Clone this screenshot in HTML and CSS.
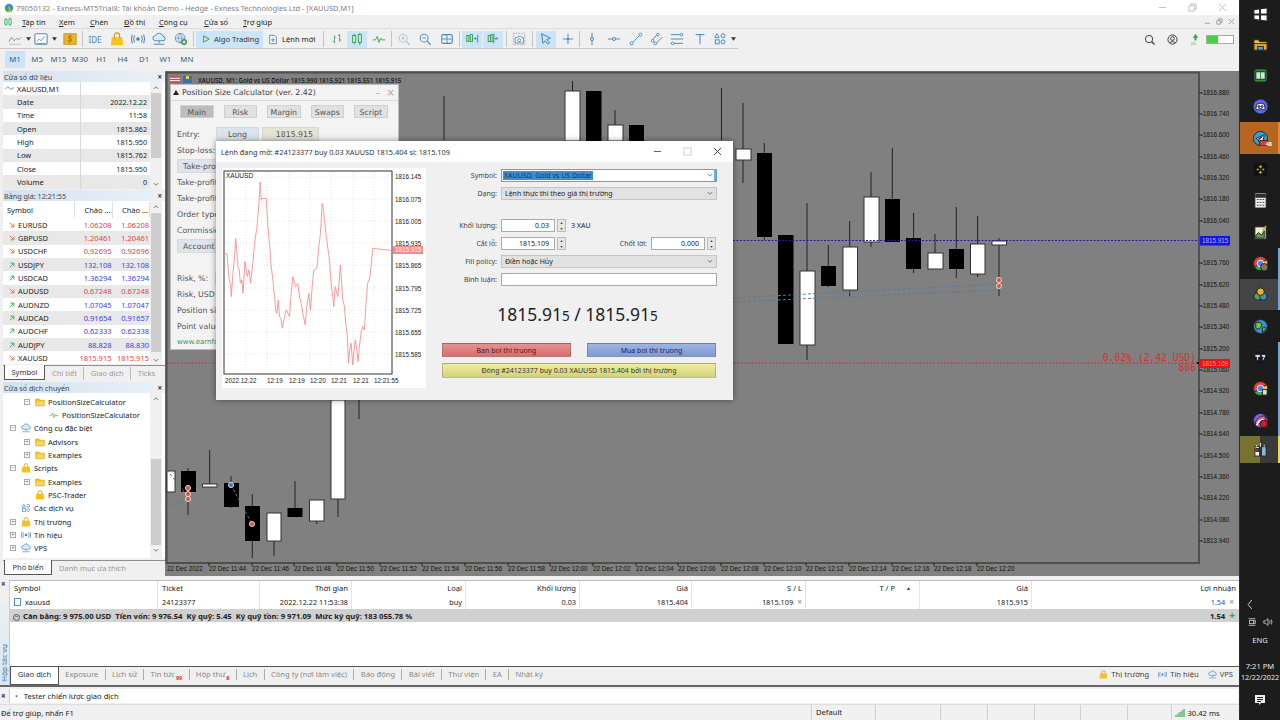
FILE: index.html
```html
<!DOCTYPE html>
<html lang="vi">
<head>
<meta charset="utf-8">
<title>Exness MT5</title>
<link rel="stylesheet" href="styles.css">
</head>
<body>
<svg class="sprite" width="0" height="0">
  <symbol id="folder" viewBox="0 0 16 16"><path d="M1 3h5l2 2h7v9H1z" fill="#f6c21c" stroke="#c99a10" stroke-width=".8"/><path d="M2 7h12v6H2z" fill="#fbd95a"/></symbol>
  <symbol id="bag" viewBox="0 0 16 16"><path d="M2 6h12l1 9H1z" fill="#f6c21c"/><path d="M5 7V4a3 3 0 0 1 6 0v3" fill="none" stroke="#c99a10" stroke-width="1.3"/></symbol>
  <symbol id="signal" viewBox="0 0 16 16"><g fill="none" stroke="#3f7fb5" stroke-width="1.1"><path d="M4 4q-2 4 0 8M12 4q2 4 0 8M1.5 3q-2 5 0 10M14.500 3q2 5 0 10"/></g><circle cx="8" cy="8" r="2" fill="#3f7fb5"/></symbol>
  <symbol id="cloud" viewBox="0 0 16 16"><path d="M4 10a3 3 0 0 1 0-6 4.500 4.500 0 0 1 8.500 1 2.500 2.500 0 0 1 0 5z" fill="#dbeaf7" stroke="#3f7fb5"/><path d="M8 10v3M2 14h12" stroke="#3f7fb5"/></symbol>
  <symbol id="globe" viewBox="0 0 16 16"><circle cx="7" cy="7" r="5.500" fill="#dbeaf7" stroke="#5b8fb9"/><path d="M1.500 7h11M7 1.500q-4 5.500 0 11M7 1.500q4 5.500 0 11" fill="none" stroke="#5b8fb9" stroke-width=".7"/><circle cx="11.500" cy="11.500" r="3.500" fill="#3d9a50"/><path d="M11.500 9.500v4M9.500 11.500h4" stroke="#fff"/></symbol>
  <symbol id="lchart" viewBox="0 0 16 16"><path d="M1 11l3-5 3 4 3-3 2 2 3-3" fill="none" stroke="#5b8fb9"/><path d="M1 14h14" stroke="#bbb"/></symbol>
  <symbol id="tpl" viewBox="0 0 16 16"><rect x="1" y="2" width="14" height="12" rx="1.500" fill="#fff" stroke="#4d87b8" stroke-width="1.200"/><path d="M3 11l3-3 2 2 4-5" fill="none" stroke="#4d87b8"/><path d="M3 13h10" stroke="#53a653"/></symbol>
  <symbol id="dollar" viewBox="0 0 16 16"><rect x="1" y="2" width="14" height="12" fill="#edb529" stroke="#c4921a"/><path d="M10.500 5.500q-1-1-2.500-1-2 0-2 1.500t2 1.500 2 1.500-2.500 1.500-2.500-1M8 3v10" fill="none" stroke="#a3730a"/></symbol>
  <symbol id="bars" viewBox="0 0 16 16"><path d="M5 4v9M3 11h2M5 6h2" fill="none" stroke="#4aa65a"/><path d="M11 2v9M9 4h2M11 9h2" fill="none" stroke="#4aa65a"/></symbol>
  <symbol id="candles" viewBox="0 0 16 16"><g fill="#c7f0cf" stroke="#2d9c46"><rect x="3" y="4" width="3.500" height="8"/><rect x="9.500" y="3" width="3.500" height="9"/></g><path d="M4.700 2v2M4.700 12v2M11.200 1v2M11.200 12v3" stroke="#2d9c46"/></symbol>
  <symbol id="gline" viewBox="0 0 16 16"><path d="M1 9h3l2-4 2 7 2-5 1 2h4" fill="none" stroke="#3d9a50"/></symbol>
  <symbol id="zin" viewBox="0 0 16 16"><circle cx="7" cy="7" r="4.500" fill="none" stroke="#b5c3cf" stroke-width="1.200"/><path d="M10.500 10.500l4 4" stroke="#b5c3cf" stroke-width="1.500"/><path d="M5 7h4M7 5v4" stroke="#b5c3cf"/></symbol>
  <symbol id="zout" viewBox="0 0 16 16"><circle cx="7" cy="7" r="4.500" fill="none" stroke="#5b8fb9" stroke-width="1.200"/><path d="M10.500 10.500l4 4" stroke="#5b8fb9" stroke-width="1.500"/><path d="M5 7h4" stroke="#5b8fb9"/></symbol>
  <symbol id="grid" viewBox="0 0 16 16"><rect x="2" y="3" width="12" height="10" rx="1.500" fill="none" stroke="#4d87b8" stroke-width="1.200"/><path d="M2 8h12M8 3v10" stroke="#4d87b8"/></symbol>
  <symbol id="auto" viewBox="0 0 16 16"><rect x="2" y="4" width="2.500" height="7" fill="#bdeec8" stroke="#2d9c46"/><rect x="6" y="3" width="2.500" height="8" fill="#bdeec8" stroke="#2d9c46"/><path d="M10 7.500h3M11.500 6l1.500 1.500-1.500 1.500M14.500 3v9" fill="none" stroke="#3f7fb5"/></symbol>
  <symbol id="shift" viewBox="0 0 16 16"><rect x="2.500" y="4" width="2.500" height="7" fill="#bdeec8" stroke="#2d9c46"/><rect x="5.500" y="3" width="2.500" height="8" fill="#bdeec8" stroke="#2d9c46"/><path d="M14 7.500h-3.500M12 6l-1.500 1.500 1.500 1.500M9 2v11" fill="none" stroke="#3f7fb5"/></symbol>
  <symbol id="cam" viewBox="0 0 16 16"><rect x="1.500" y="1.500" width="13" height="13" fill="none" stroke="#8a9aa8" stroke-dasharray="1.500 1.500"/><path d="M3.500 6.500h2.500l1-1.500h3l1 1.500h2v6h-9.500z" fill="#fff" stroke="#4d87b8"/><circle cx="8.200" cy="9.500" r="1.800" fill="none" stroke="#4d87b8"/></symbol>
  <symbol id="cursor" viewBox="0 0 16 16"><path d="M3 2l10 5-4 1.500 3 4-2 1.500-3-4-2.500 3z" fill="none" stroke="#3f7fb5" stroke-width="1.100"/></symbol>
  <symbol id="cross" viewBox="0 0 16 16"><path d="M8 2v12M2 8h12" stroke="#3f7fb5"/><circle cx="8" cy="8" r="1.200" fill="#3f7fb5"/></symbol>
  <symbol id="vl" viewBox="0 0 16 16"><path d="M8 1v14" stroke="#3f7fb5"/><circle cx="8" cy="8" r="1.800" fill="#dbeaf7" stroke="#3f7fb5"/></symbol>
  <symbol id="hl" viewBox="0 0 16 16"><path d="M1 8h14" stroke="#3f7fb5"/><circle cx="8" cy="8" r="1.800" fill="#dbeaf7" stroke="#3f7fb5"/></symbol>
  <symbol id="trend" viewBox="0 0 16 16"><path d="M3 13L13 3" stroke="#3f7fb5"/><circle cx="3" cy="13" r="1.700" fill="#fff" stroke="#3f7fb5"/><circle cx="13" cy="3" r="1.700" fill="#fff" stroke="#3f7fb5"/></symbol>
  <symbol id="chan" viewBox="0 0 16 16"><path d="M2 10l7-8M6 14l8-8" stroke="#3f7fb5"/><circle cx="3" cy="10" r="1.500" fill="#fff" stroke="#3f7fb5"/><circle cx="9" cy="3" r="1.500" fill="#fff" stroke="#3f7fb5"/><circle cx="6" cy="13" r="1.500" fill="#fff" stroke="#3f7fb5"/></symbol>
  <symbol id="fibo" viewBox="0 0 16 16"><path d="M1 3h14M1 8h14M1 13h14" stroke="#3f7fb5"/><circle cx="13" cy="3" r="1.500" fill="#fff" stroke="#3f7fb5"/><circle cx="3" cy="13" r="1.500" fill="#fff" stroke="#3f7fb5"/></symbol>
  <symbol id="ttool" viewBox="0 0 16 16"><path d="M3 3h10M8 3v11" stroke="#3f7fb5" stroke-width="1.100"/></symbol>
  <symbol id="shapes" viewBox="0 0 16 16"><path d="M4.500 2l2.500 4.500h-5z" fill="none" stroke="#3f7fb5"/><circle cx="11.500" cy="4.300" r="2.300" fill="none" stroke="#3f7fb5"/><rect x="2.500" y="9" width="4.500" height="4.500" fill="none" stroke="#3f7fb5"/><circle cx="11.500" cy="11.300" r="2.300" fill="none" stroke="#3f7fb5"/></symbol>
  <symbol id="tri" viewBox="0 0 6 4"><path d="M0 0h6L3 4z" fill="#333"/></symbol>
  <symbol id="up" viewBox="0 0 8 6"><path d="M1 5l3-3 3 3" fill="none" stroke="#555"/></symbol>
  <symbol id="down" viewBox="0 0 8 6"><path d="M1 1l3 3 3-3" fill="none" stroke="#555"/></symbol>
  <symbol id="ared" viewBox="0 0 8 8"><path d="M1 1l5 5M2 6.500h4.500V2" fill="none" stroke="#e8604c" stroke-width="1.200"/></symbol>
  <symbol id="agrn" viewBox="0 0 8 8"><path d="M1 7l5-5M2 1.500h4.500V6" fill="none" stroke="#2fa14f" stroke-width="1.200"/></symbol>
</svg>

<div class="screen">
  <div class="app">
    <header class="titlebar">
      <svg class="appico" viewBox="0 0 12 12"><circle cx="6" cy="6" r="5" fill="#3b8fc9"/><path d="M3 11l3-8 3 8z" fill="#e8b21c"/><circle cx="4" cy="8" r="2.200" fill="#4aa65a"/></svg>
      <span class="titletext">79050132 - Exness-MT5Trial8: Tài khoản Demo - Hedge - Exness Technologies Ltd - [XAUUSD,M1]</span>
      <div class="winctl">
        <svg viewBox="0 0 10 10"><path d="M1 5h8" stroke="#bbb"/></svg>
        <svg viewBox="0 0 10 10"><path d="M1 3h6v6H1zM3 3V1h6v6H7" fill="none" stroke="#bbb"/></svg>
        <svg viewBox="0 0 10 10"><path d="M1 1l8 8M9 1l-8 8" stroke="#bbb"/></svg>
      </div>
    </header>
    <nav class="menubar">
      <svg class="menuico"><use href="#candles"/></svg>
      <span class="m1"><u>T</u>ập tin</span><span class="m2"><u>X</u>em</span><span class="m3"><u>C</u>hèn</span><span class="m4"><u>Đ</u>ồ thị</span><span class="m5"><u>C</u>ông cụ</span><span class="m6"><u>C</u>ửa sổ</span><span class="m7"><u>T</u>rợ giúp</span>
      <div class="mdi">
        <svg viewBox="0 0 8 8"><path d="M1 6h6" stroke="#999"/></svg>
        <svg viewBox="0 0 8 8"><path d="M1 3h4v4H1zM3 3V1h4v4H5" fill="none" stroke="#999"/></svg>
        <svg viewBox="0 0 8 8"><path d="M1 1l6 6M7 1L1 7" stroke="#999"/></svg>
      </div>
    </nav>
    <div class="toolbar">
      <div class="tb"><svg><use href="#lchart"/></svg></div><div class="dd"><svg><use href="#tri"/></svg></div>
      <div class="tb"><svg><use href="#tpl"/></svg></div><div class="dd"><svg><use href="#tri"/></svg></div>
      <div class="tb ml3"><svg><use href="#dollar"/></svg></div>
      <i class="sep s1"></i>
      <div class="tb ide">IDE</div>
      <div class="tb ml2"><svg><use href="#bag"/></svg></div>
      <div class="tb ml1"><svg><use href="#signal"/></svg></div>
      <div class="tb ml1"><svg><use href="#cloud"/></svg></div>
      <div class="tb ml2"><svg><use href="#globe"/></svg></div>
      <i class="sep s1"></i>
      <div class="algo"><svg viewBox="0 0 10 10"><path d="M2 1l7 4-7 4z" fill="none" stroke="#2d9c46" stroke-width="1.100"/></svg>Algo Trading</div>
      <div class="neworder"><svg viewBox="0 0 12 12"><path d="M2 1h6l2 2v8H2z" fill="#fff" stroke="#3f7fb5"/><path d="M6 4v5M3.500 6.500h5" stroke="#3f7fb5"/></svg>Lệnh mới</div>
      <i class="sep s2"></i>
      <div class="tb"><svg><use href="#bars"/></svg></div>
      <div class="tb on"><svg><use href="#candles"/></svg></div>
      <div class="tb ml2"><svg><use href="#gline"/></svg></div>
      <i class="sep s1"></i>
      <div class="tb"><svg><use href="#zin"/></svg></div>
      <div class="tb ml1"><svg><use href="#zout"/></svg></div>
      <div class="tb ml2"><svg><use href="#grid"/></svg></div>
      <i class="sep s1"></i>
      <div class="tb on"><svg><use href="#auto"/></svg></div>
      <div class="tb on ml1"><svg><use href="#shift"/></svg></div>
      <i class="sep s3"></i>
      <div class="tb"><svg><use href="#cam"/></svg></div>
      <i class="sep s2"></i>
      <div class="tb on"><svg><use href="#cursor"/></svg></div>
      <div class="tb ml2"><svg><use href="#cross"/></svg></div>
      <i class="sep s4"></i>
      <div class="tb"><svg><use href="#vl"/></svg></div>
      <div class="tb ml2"><svg><use href="#hl"/></svg></div>
      <div class="tb ml2"><svg><use href="#trend"/></svg></div>
      <div class="tb ml1"><svg><use href="#chan"/></svg></div>
      <div class="tb"><svg><use href="#fibo"/></svg></div>
      <div class="tb ml3"><svg><use href="#ttool"/></svg></div>
      <div class="tb"><svg><use href="#shapes"/></svg></div><div class="dd"><svg><use href="#tri"/></svg></div>
      <div class="tbright">
        <svg viewBox="0 0 12 12"><circle cx="5.500" cy="5.500" r="4" fill="none" stroke="#333"/><path d="M8.500 8.500l3 3" stroke="#333" stroke-width="1.300"/></svg>
        <svg viewBox="0 0 12 12"><circle cx="6" cy="6" r="5" fill="none" stroke="#333"/><circle cx="6" cy="5" r="2" fill="none" stroke="#333"/><path d="M2.500 9.500q3.500-3 7 0" fill="none" stroke="#333"/></svg>
        <svg viewBox="0 0 12 12"><path d="M6 0l3 4H7v3H5V4H3z" fill="#2fa14f"/><text x="1" y="12" class="lvl">LVL</text></svg>
        <div class="level"><i></i></div>
      </div>
    </div>
    <div class="tfbar">
      <span class="tf on">M1</span><span class="tf">M5</span><span class="tf">M15</span><span class="tf">M30</span><span class="tf">H1</span><span class="tf">H4</span><span class="tf">D1</span><span class="tf">W1</span><span class="tf">MN</span>
    </div>

    <main class="workspace">
      <aside class="left">
        <section class="panel data">
          <div class="phead"><span>Cửa sổ dữ liệu</span><b>×</b></div>
          <div class="pbody">
            <div class="dtable">
              <div class="drow hd"><span class="dsym"><svg viewBox="0 0 10 10"><path d="M0 6l3-3 3 3 4-2" fill="none" stroke="#5b8fb9"/></svg>XAUUSD,M1</span><span></span></div>
              <div class="drow alt"><span>Date</span><span>2022.12.22</span></div>
              <div class="drow"><span>Time</span><span>11:58</span></div>
              <div class="drow alt"><span>Open</span><span>1815.862</span></div>
              <div class="drow"><span>High</span><span>1815.950</span></div>
              <div class="drow alt"><span>Low</span><span>1815.762</span></div>
              <div class="drow"><span>Close</span><span>1815.950</span></div>
              <div class="drow alt"><span>Volume</span><span>0</span></div>
            </div>
            <div class="sbar"><svg><use href="#up"/></svg><i class="thumb t1"></i><svg><use href="#down"/></svg></div>
          </div>
        </section>
        <section class="panel mw">
          <div class="phead"><span>Bảng giá: 12:21:55</span><b>×</b></div>
          <div class="pbody">
            <div class="mtable">
              <div class="mrow hd"><span>Symbol</span><span>Chào ...</span><span>Chào ...</span></div>
              <div class="mrow dn"><span><svg><use href="#ared"/></svg>EURUSD</span><span>1.06208</span><span>1.06208</span></div>
              <div class="mrow dn alt"><span><svg><use href="#ared"/></svg>GBPUSD</span><span>1.20461</span><span>1.20461</span></div>
              <div class="mrow dn"><span><svg><use href="#ared"/></svg>USDCHF</span><span>0.92695</span><span>0.92696</span></div>
              <div class="mrow upv alt"><span><svg><use href="#agrn"/></svg>USDJPY</span><span>132.108</span><span>132.108</span></div>
              <div class="mrow upv"><span><svg><use href="#agrn"/></svg>USDCAD</span><span>1.36294</span><span>1.36294</span></div>
              <div class="mrow dn alt"><span><svg><use href="#ared"/></svg>AUDUSD</span><span>0.67248</span><span>0.67248</span></div>
              <div class="mrow upv"><span><svg><use href="#agrn"/></svg>AUDNZD</span><span>1.07045</span><span>1.07047</span></div>
              <div class="mrow upv alt"><span><svg><use href="#agrn"/></svg>AUDCAD</span><span>0.91654</span><span>0.91657</span></div>
              <div class="mrow upv"><span><svg><use href="#agrn"/></svg>AUDCHF</span><span>0.62333</span><span>0.62338</span></div>
              <div class="mrow upv alt"><span><svg><use href="#agrn"/></svg>AUDJPY</span><span>88.828</span><span>88.830</span></div>
              <div class="mrow dn"><span><svg><use href="#ared"/></svg>XAUUSD</span><span>1815.915</span><span>1815.915</span></div>
            </div>
            <div class="sbar"><svg><use href="#up"/></svg><i class="thumb t2"></i><svg><use href="#down"/></svg></div>
          </div>
          <div class="ptabs mwtabs"><span class="active">Symbol</span><span>Chi tiết</span><span>Giao dịch</span><span>Ticks</span></div>
        </section>
        <section class="panel nav">
          <div class="phead"><span>Cửa sổ dịch chuyển</span><b>×</b></div>
          <div class="pbody">
            <div class="tree">
              <div class="node l2"><i class="box">−</i><svg><use href="#folder"/></svg>PositionSizeCalculator</div>
              <div class="node l3"><svg><use href="#gline"/></svg>PositionSizeCalculator</div>
              <div class="node l1"><i class="box">−</i><svg><use href="#cloud"/></svg>Công cụ đặc biệt</div>
              <div class="node l2"><i class="box">+</i><svg><use href="#folder"/></svg>Advisors</div>
              <div class="node l2"><i class="box">+</i><svg><use href="#folder"/></svg>Examples</div>
              <div class="node l1"><i class="box">−</i><svg><use href="#bag"/></svg>Scripts</div>
              <div class="node l2"><i class="box">+</i><svg><use href="#folder"/></svg>Examples</div>
              <div class="node l2"><i class="box nobox"></i><svg><use href="#bag"/></svg>PSC-Trader</div>
              <div class="node l1"><i class="box nobox"></i><svg><use href="#shapes"/></svg>Các dịch vụ</div>
              <div class="node l1"><i class="box">+</i><svg><use href="#bag"/></svg>Thị trường</div>
              <div class="node l1"><i class="box">+</i><svg><use href="#signal"/></svg>Tín hiệu</div>
              <div class="node l1"><i class="box">+</i><svg><use href="#cloud"/></svg>VPS</div>
            </div>
            <div class="sbar nb"><svg><use href="#up"/></svg><i class="thumb t3"></i><svg><use href="#down"/></svg></div>
          </div>
          <div class="ptabs navtabs"><span class="active">Phổ biến</span><span>Danh mục ưa thích</span></div>
        </section>
      </aside>

      <section class="chart">
        <svg class="plot" viewBox="165 71 1074 505" width="1074" height="505">
          <rect x="165" y="71" width="1074" height="505" fill="#808080"/>
          <path d="M166.500 563V72.500H1199V563z" fill="none" stroke="#4f4f4f" stroke-width="2"/>
          <g class="wick">
            <path d="M444 96V140M572.500 81V91M615 110V125M721.500 88V140M743 103V183M764.300 143V240M807 203V360M828.300 245V287M849.700 221V296M871 172V247M892.300 148V242M913.600 213V273M935 234V269M956.300 207V278M977.600 216V277M999 238V296"/>
            <path d="M188 468V515M209.700 450V487M231 476V508M252.300 494V558M274 513V556M295 481V517M316.700 500V524M338 400V517M359 400V419"/>
          </g>
          <g class="wc">
            <rect x="565" y="91" width="15" height="50"/><rect x="608" y="125" width="15" height="16"/>
            <rect x="736" y="149" width="15" height="11"/><rect x="800" y="271" width="15" height="74"/><rect x="843" y="247" width="14.500" height="43"/><rect x="864" y="197" width="15" height="45"/><rect x="928" y="253" width="15" height="16"/><rect x="970.500" y="244" width="14.500" height="30"/><rect x="992" y="241" width="14.500" height="4"/>
            <rect x="167" y="471" width="8" height="21"/><rect x="202.500" y="484" width="14.500" height="3"/><rect x="267" y="513" width="14" height="28"/><rect x="309.500" y="500" width="14.500" height="21"/><rect x="331" y="400" width="14" height="99"/>
          </g>
          <g class="bc">
            <rect x="586" y="91" width="15.500" height="50"/><rect x="629" y="125" width="15" height="16"/>
            <rect x="757" y="153" width="15" height="84"/><rect x="778" y="235" width="15.500" height="109"/><rect x="821" y="266" width="15" height="20"/><rect x="885" y="199" width="15" height="43"/><rect x="906" y="238" width="15" height="31"/><rect x="949" y="249" width="15" height="20"/>
            <rect x="181" y="471" width="15" height="21"/><rect x="224" y="483" width="15" height="24"/><rect x="245" y="506" width="15" height="35"/><rect x="287.500" y="508" width="15" height="9"/>
          </g>
          <path d="M733 240.500H1199" stroke="#2020a0" stroke-dasharray="2 1.500"/>
          <path d="M167 363H1199" stroke="#d02020" stroke-dasharray="1.500 2"/>
          <g class="trade">
            <path d="M733 298L997 284M733 302L997 290M167 470L188 497M167 505L188 501M231 485L252 524"/>
          </g>
          <g class="mark">
            <circle cx="999" cy="280" r="2.500"/><circle cx="999" cy="286" r="2.500"/><circle cx="188" cy="488" r="2.500"/><circle cx="188" cy="494" r="2.500"/><circle cx="188" cy="499" r="2.500"/><circle cx="252" cy="524" r="2.500"/>
            <circle class="bl" cx="231" cy="485" r="2.500"/>
          </g>
          <text class="ptext" x="1196" y="361" text-anchor="end">0.02% (2.42 USD)</text>
          <text class="ptext" x="1196" y="371" text-anchor="end">806</text>
          <g class="axis">
            <path class="tk" d="M1199 93h4M1199 114h4M1199 135h4M1199 157h4M1199 178h4M1199 199h4M1199 221h4M1199 263h4M1199 285h4M1199 306h4M1199 327h4M1199 349h4M1199 370h4M1199 391h4M1199 413h4M1199 434h4M1199 456h4M1199 477h4M1199 498h4M1199 520h4M1199 541h4M209 563v3M252 563v3M294 563v3M337 563v3M380 563v3M422 563v3M465 563v3M508 563v3M550 563v3M593 563v3M636 563v3M678 563v3M721 563v3M764 563v3M806 563v3M849 563v3M892 563v3M934 563v3M977 563v3"/>
            <text x="1203" y="95">1816.880</text><text x="1203" y="116">1816.740</text><text x="1203" y="137">1816.600</text><text x="1203" y="159">1816.460</text><text x="1203" y="180">1816.320</text><text x="1203" y="201">1816.180</text><text x="1203" y="223">1816.040</text>
            <text x="1203" y="265">1815.760</text><text x="1203" y="287">1815.620</text><text x="1203" y="308">1815.480</text><text x="1203" y="329">1815.340</text><text x="1203" y="351">1815.200</text><text x="1203" y="372">1815.060</text><text x="1203" y="393">1814.920</text><text x="1203" y="415">1814.780</text><text x="1203" y="436">1814.640</text><text x="1203" y="458">1814.500</text><text x="1203" y="479">1814.360</text><text x="1203" y="500">1814.220</text><text x="1203" y="522">1814.080</text><text x="1203" y="543">1813.940</text>
            <text x="167" y="571">22 Dec 2022</text><text x="209" y="571">22 Dec 11:44</text><text x="252" y="571">22 Dec 11:46</text><text x="294" y="571">22 Dec 11:48</text><text x="337" y="571">22 Dec 11:50</text><text x="380" y="571">22 Dec 11:52</text><text x="422" y="571">22 Dec 11:54</text><text x="465" y="571">22 Dec 11:56</text><text x="508" y="571">22 Dec 11:58</text><text x="550" y="571">22 Dec 12:00</text><text x="593" y="571">22 Dec 12:02</text><text x="636" y="571">22 Dec 12:04</text><text x="678" y="571">22 Dec 12:06</text><text x="721" y="571">22 Dec 12:08</text><text x="764" y="571">22 Dec 12:10</text><text x="806" y="571">22 Dec 12:12</text><text x="849" y="571">22 Dec 12:14</text><text x="892" y="571">22 Dec 12:16</text><text x="934" y="571">22 Dec 12:18</text><text x="977" y="571">22 Dec 12:20</text>
          </g>
          <rect x="1200" y="236" width="30" height="9.500" fill="#1414e6"/>
          <text class="tag" x="1202" y="243" fill="#b8b8f0">1815.915</text>
          <rect x="1200" y="359" width="30" height="9" fill="#ee1111"/>
          <text class="tag" x="1202" y="366" fill="#f0a0a0">1815.109</text>
          <rect x="1197" y="362" width="2" height="2" fill="#000"/>
          <g>
            <rect x="170" y="76" width="10" height="7" fill="#d34a4a"/><path d="M170 78.300h10M170 80.600h10" stroke="#fff"/>
            <rect x="183" y="76" width="9" height="7" fill="#3a6fb0"/><rect x="186" y="76" width="3" height="3" fill="#e8d040"/>
            <text class="ctitle" x="198" y="83">XAUUSD, M1:  Gold vs US Dollar  1815.990 1815.921 1815.551 1815.915</text>
          </g>
        </svg>

        <div class="psc">
          <div class="psc-title"><span><i class="psc-tri"></i>Position Size Calculator (ver. 2.42)</span><span class="psc-ctl">–&nbsp;&nbsp;×</span></div>
          <div class="psc-tabs"><span class="on">Main</span><span>Risk</span><span>Margin</span><span>Swaps</span><span>Script</span></div>
          <div class="psc-body">
            <div class="pr"><label>Entry:</label><span class="pb long">Long</span><span class="pb val">1815.915</span></div>
            <div class="pr"><label>Stop-loss:</label></div>
            <div class="pr"><span class="pb wide">Take-profit</span></div>
            <div class="pr"><label>Take-profit</label></div>
            <div class="pr"><label>Take-profit</label></div>
            <div class="pr"><label>Order type</label></div>
            <div class="pr"><label>Commission</label></div>
            <div class="pr"><span class="pb wide">Account balance</span></div>
            <div class="pr gap"><label>Risk, %:</label><span class="pb in">1</span></div>
            <div class="pr"><label>Risk, USD</label></div>
            <div class="pr"><label>Position size</label></div>
            <div class="pr"><label>Point value</label></div>
            <div class="pr link">www.earnforex.com</div>
          </div>
        </div>

        <div class="dialog">
          <div class="dlg-title"><span>Lệnh đang mở: #24123377 buy 0.03 XAUUSD 1815.404 sl: 1815.109</span>
            <div class="dlg-ctl">
              <svg viewBox="0 0 10 10"><path d="M1 5h8" stroke="#555"/></svg>
              <svg viewBox="0 0 10 10"><rect x="1" y="1" width="8" height="8" fill="none" stroke="#ccc"/></svg>
              <svg viewBox="0 0 10 10"><path d="M1 1l8 8M9 1l-8 8" stroke="#333"/></svg>
            </div>
          </div>
          <div class="dlg-body">
            <div class="tickbox">
              <svg class="tick" viewBox="222 168 204 220" width="204" height="220">
                <rect x="224" y="171" width="168" height="203" fill="#fff" stroke="#333"/>
                <g class="tgrid"><path d="M246 172V373M267 172V373M289 172V373M310 172V373M331 172V373M353 172V373M374 172V373M225 177H391M225 199H391M225 221H391M225 243H391M225 265H391M225 288H391M225 310H391M225 332H391M225 354H391"/></g>
                <svg x="224" y="171" width="167" height="203" viewBox="163 303 502 609">
                  <polyline class="tline" points="163,550 172,552 178,625 182,640 185,680 190,610 195,560 198,505 202,550 205,590 209,600 212,640 217,630 220,670 226,575 233,620 238,600 243,640 250,575 255,520 262,470 268,400 272,335 275,390 277,385 290,385 295,470 300,520 305,590 310,630 315,680 318,720 322,730 326,690 330,740 334,745 338,775 344,745 350,720 355,730 360,740 365,670 370,620 378,650 385,640 390,680 395,700 401,735 407,765 412,710 418,670 423,720 428,650 433,600 442,595 448,530 453,490 458,400 462,420 465,450 472,510 476,540 480,570 485,640 490,680 493,710 497,650 505,680 509,640 513,585 520,690 525,710 530,770 534,800 537,880 541,840 545,820 550,885 554,840 558,810 562,840 566,875 570,830 575,790 580,770 585,780 590,700 595,640 602,620 606,580 610,535 665,541"/>
                </svg>
                <text class="tl sym" x="226" y="178">XAUUSD</text>
                <g class="tl">
                  <text x="395" y="179">1816.145</text><text x="395" y="202">1816.075</text><text x="395" y="224">1816.005</text><text x="395" y="246">1815.935</text><text x="395" y="268">1815.865</text><text x="395" y="291">1815.795</text><text x="395" y="313">1815.725</text><text x="395" y="335">1815.655</text><text x="395" y="357">1815.585</text>
                  <text x="225" y="383">2022.12.22</text><text x="267" y="383">12:19</text><text x="289" y="383">12:19</text><text x="310" y="383">12:20</text><text x="331" y="383">12:21</text><text x="353" y="383">12:21</text><text x="374" y="383">12:21:55</text>
                </g>
                <rect x="393" y="246" width="30" height="8" fill="#f58a8a"/>
                <text class="tl wh" x="395" y="252">1815.915</text>
              </svg>
            </div>
            <div class="orderform">
              <div class="fr"><label>Symbol:</label><div class="combo sel"><span class="seltext">XAUUSD, Gold vs US Dollar</span><svg><use href="#down"/></svg></div></div>
              <div class="fr"><label>Dạng:</label><div class="combo"><span>Lệnh thực thi theo giá thị trường</span><svg><use href="#down"/></svg></div></div>
              <div class="fr mt"><label>Khối lượng:</label><div class="num">0.03</div><div class="spin"><i>▲</i><i>▼</i></div><span class="unit">3 XAU</span></div>
              <div class="fr"><label>Cắt lỗ:</label><div class="num">1815.109</div><div class="spin"><i>▲</i><i>▼</i></div><label class="tp">Chốt lời:</label><div class="num">0.000</div><div class="spin"><i>▲</i><i>▼</i></div></div>
              <div class="fr"><label>Fill policy:</label><div class="combo"><span>Điền hoặc Hủy</span><svg><use href="#down"/></svg></div></div>
              <div class="fr"><label>Bình luận:</label><div class="combo white"></div></div>
              <div class="bigprice">1815.91<small>5</small> / 1815.91<small>5</small></div>
              <div class="btnrow"><span class="btn red">Ban boi thi truong</span><span class="btn blue">Mua boi thi truong</span></div>
              <div class="btn yellow">Đóng #24123377 buy 0.03 XAUUSD 1815.404 bởi thị trường</div>
            </div>
          </div>
        </div>
      </section>
    </main>

    <section class="terminal">
      <div class="vstrip"><b>×</b><span>Hộp tác vụ</span></div>
      <div class="termmain">
        <div class="trow thead">
          <span>Symbol</span><span>Ticket</span><span class="r">Thời gian</span><span class="r">Loại</span><span class="r">Khối lượng</span><span class="r">Giá</span><span class="r">S / L</span><span class="r tpc">T / P<em>▴</em></span><span class="r">Giá</span><span class="r">Lợi nhuận</span>
        </div>
        <div class="trow nums">
          <span class="posn"><i class="posico"></i>xauusd</span><span>24123377</span><span class="r">2022.12.22 11:53:38</span><span class="r">buy</span><span class="r">0.03</span><span class="r">1815.404</span><span class="r slc">1815.109<em>×</em></span><span></span><span class="r">1815.915</span><span class="r slc pr2"><span class="profit">1.54</span><em>×</em></span>
        </div>
        <div class="summary"><span><i class="cc">−</i>Cân bằng: 9 975.00 USD&nbsp; Tiền vốn: 9 976.54&nbsp; Ký quỹ: 5.45&nbsp; Ký quỹ tồn: 9 971.09&nbsp; Mức ký quỹ: 183 055.78 %</span><span class="sumr">1.54<em>+</em></span></div>
        <div class="ttabs">
          <span class="active">Giao dịch</span><span>Exposure</span><span>Lịch sử</span><span>Tin tức<sub>99</sub></span><span>Hộp thư<sub>8</sub></span><span>Lịch</span><span>Công ty (nơi làm việc)</span><span>Báo động</span><span>Bài viết</span><span>Thư viện</span><span>EA</span><span class="last">Nhật ký</span>
          <div class="tright"><span><svg><use href="#bag"/></svg>Thị trường</span><span><svg><use href="#signal"/></svg>Tín hiệu</span><span><svg><use href="#cloud"/></svg>VPS</span></div>
        </div>
      </div>
    </section>
    <section class="tester">
      <b class="tx">×</b>
      <div class="testbox"><span class="bullet">•</span>Tester chiến lược giao dịch</div>
    </section>
    <footer class="status">
      <span class="s-help">Để trợ giúp, nhấn F1</span><span class="s-def">Default</span><span class="s-c c1"></span><span class="s-c c2"></span><span class="s-c c3"></span><span class="s-c c3"></span><span class="s-c c3"></span><span class="s-c c4"></span>
      <span class="s-ping"><svg viewBox="0 0 10 8"><path d="M1 8V6M3 8V4.500M5 8V3M7 8V1.500M9 8V0" stroke="#3dab4f" stroke-width="1.200"/></svg>30.42 ms</span>
    </footer>
  </div>

  <aside class="taskbar">
    <div class="tk first"><svg viewBox="0 0 16 16"><path d="M1 3l6-1v5.500H1zM8 2l7-1v6.500H8zM1 8.500h6V14l-6-1zM8 8.500h7V15l-7-1z" fill="#fff"/></svg></div>
    <div class="tk"><svg viewBox="0 0 16 16"><path d="M1 3h5l1 2h8v9H1z" fill="#f3c74b"/><path d="M1 7h14v7H1z" fill="#e5a92c"/><rect x="5" y="10" width="6" height="4" fill="#4aa0d8"/></svg></div>
    <div class="tk"><svg viewBox="0 0 16 16"><rect x="1" y="1" width="14" height="14" rx="3" fill="#2f8a44"/><rect x="3" y="4" width="10" height="8" fill="#cfe8d2"/><path d="M8 4v8" stroke="#2f8a44"/></svg></div>
    <div class="tk"><svg viewBox="0 0 16 16"><circle cx="8" cy="8" r="8" fill="#5865f2"/><path d="M4 5.500q4-1.800 8 0l1 5q-1.500 1-2.500 1l-.7-1H6.200l-.7 1q-1 0-2.500-1z" fill="#fff"/><circle cx="6.300" cy="8" r="1" fill="#5865f2"/><circle cx="9.700" cy="8" r="1" fill="#5865f2"/></svg></div>
    <div class="tk hot"><svg viewBox="0 0 16 16"><circle cx="8" cy="8" r="7.500" fill="#2fa3da"/><path d="M3 8l9-4-1.500 8-3-2-1.500 1.500V9.500l4-3.500-5 3z" fill="#fff"/><rect x="7" y="10" width="9" height="6" rx="1" fill="#e53935"/></svg><span class="badge">48</span></div>
    <div class="tk"><svg viewBox="0 0 16 16"><rect x="0" y="0" width="16" height="16" rx="3" fill="#111"/><path d="M8 3l2 2-2 2-2-2zM3.500 8l1.500-1.500L6.500 8 5 9.500zM9.500 8L11 6.500 12.500 8 11 9.500zM8 9l2 2-2 2-2-2z" fill="#f0b90b"/></svg></div>
    <div class="tk"><svg viewBox="0 0 16 16"><rect x="2" y="0" width="12" height="16" fill="#f4f4f4"/><rect x="3" y="1.500" width="10" height="3" fill="#333"/><path d="M4 7h2M7 7h2M10 7h2M4 10h2M7 10h2M10 10h2M4 13h2M7 13h2M10 13h2" stroke="#333"/></svg></div>
    <div class="tk"><svg viewBox="0 0 16 16"><rect x="2" y="2" width="12" height="13" fill="#e8efd4"/><path d="M3 11l3-3 3 3 3-5v8H3z" fill="#5ea64a"/><path d="M14 1l-4 5" stroke="#d6a928" stroke-width="1.500"/></svg></div>
    <div class="tk st"><svg viewBox="0 0 16 16"><circle cx="8" cy="8" r="7.500" fill="#e6443a"/><path d="M8 8L1.500 12A7.500 7.500 0 0 0 11 15z" fill="#3aa757"/><path d="M8 8l3 7a7.500 7.500 0 0 0 3.500-11z" fill="#f8c630"/><circle cx="8" cy="8" r="3.500" fill="#4285f4" stroke="#fff"/><circle cx="12" cy="12" r="4" fill="#8a6d5a"/></svg></div>
    <div class="tk sel"><svg viewBox="0 0 16 16"><circle cx="5" cy="10" r="4" fill="#4aa65a"/><circle cx="11" cy="10" r="4" fill="#3b8fc9"/><circle cx="8" cy="5" r="4" fill="#e8b21c"/></svg></div>
    <div class="tk"><svg viewBox="0 0 16 16"><circle cx="8" cy="8" r="7.500" fill="#3a8fd0"/><path d="M3 4q4-2 6 1t-2 5-4-1zM10 10q3-2 4-1-1 4-4 5z" fill="#7cc243"/></svg></div>
    <div class="tk st"><svg viewBox="0 0 16 16"><circle cx="8" cy="8" r="8" fill="#131722"/><path d="M2 5h6v2.500H6V11H4V7.500H2zM9 5h5l-2.500 6H9.500l1.500-3.500H9z" fill="#fff"/></svg></div>
    <div class="tk st"><svg viewBox="0 0 16 16"><circle cx="8" cy="8" r="7.500" fill="#e6443a"/><path d="M8 8L1.500 12A7.500 7.500 0 0 0 11 15z" fill="#3aa757"/><path d="M8 8l3 7a7.500 7.500 0 0 0 3.500-11z" fill="#f8c630"/><circle cx="8" cy="8" r="3.500" fill="#4285f4" stroke="#fff"/><rect x="10" y="9" width="5" height="6" fill="#ddd"/></svg></div>
    <div class="tk st"><svg viewBox="0 0 16 16"><circle cx="8" cy="8" r="7.500" fill="#8c5ce0"/><path d="M2 12Q4 3 13 3v6z" fill="#ec5fa2"/><path d="M4 13Q6 7 12 7" fill="none" stroke="#fff" stroke-width="2"/><circle cx="11.500" cy="11.500" r="4" fill="#e81123"/></svg></div>
    <div class="tk yl"><svg viewBox="0 0 16 16"><rect x="2" y="5" width="5" height="10" fill="#f2f2f2"/><rect x="9" y="5" width="5" height="10" fill="#8fb6d8"/><path d="M4 3v2M8 1v4M12 3v2" stroke="#ddd"/><rect x="3" y="7" width="3" height="3" fill="#d33"/></svg></div>
    <div class="tray">
      <svg class="chev" viewBox="0 0 8 12"><path d="M6 1L2 6l4 5" fill="none" stroke="#ddd"/></svg>
      <div class="trayicons">
        <svg viewBox="0 0 12 12"><path d="M2 2h8M2 10h8" stroke="#ccc"/><rect x="3" y="4" width="5" height="4" fill="none" stroke="#ccc"/><path d="M8 5l2-1v4l-2-1" fill="none" stroke="#ccc"/></svg>
        <svg viewBox="0 0 12 12"><path d="M1 4.500h2L6 2v8L3 7.500H1z" fill="none" stroke="#ccc"/><path d="M8 4q1 2 0 4M10 3q1.500 3 0 6" fill="none" stroke="#ccc"/></svg>
      </div>
      <span class="eng">ENG</span>
      <span class="clock">7:21 PM</span>
      <span class="date">12/22/2022</span>
      <svg class="notif" viewBox="0 0 12 12"><path d="M1 1h10v8H7l-2 2V9H1z" fill="#eee"/><path d="M3 3.500h6M3 5.500h6M3 7.500h4" stroke="#1c1c1c"/></svg>
    </div>
  </aside>
</div>
</body>
</html>
```
FILE: styles.css
```css
* { box-sizing: border-box; }
html, body { margin: 0; padding: 0; width: 1280px; height: 720px; overflow: hidden; background: #f0f0f0; }
.sprite { position: absolute; }
.screen { display: flex; width: 1280px; height: 720px; font-family: "Noto Sans", "Liberation Sans", sans-serif; font-size: 7.4px; color: #222; filter: blur(.35px); }
.app { width: 1239px; height: 720px; display: flex; flex-direction: column; background: #f0f0f0; }

/* title / menu */
.titlebar { height: 15px; background: #fff; display: flex; align-items: center; padding-left: 4px; color: #808080; font-size: 7.5px; }
.appico { width: 10px; height: 10px; margin-right: 2px; }
.titletext { white-space: nowrap; }
.winctl { margin-left: auto; display: flex; gap: 21px; padding-right: 12px; }
.winctl svg { width: 9px; height: 9px; }
.menubar { height: 14px; display: flex; align-items: center; font-size: 7.5px; position: relative; padding-left: 0; border-bottom: 1px solid #dcdcdc; white-space: nowrap; }
.menuico { width: 10px; height: 10px; margin: 0 7px 0 3px; }
.m1 { width: 37px; margin-left: 2px; } .m2 { width: 31px; } .m3 { width: 34px; } .m4 { width: 35px; } .m5 { width: 45px; } .m6 { width: 39px; }
.mdi { margin-left: auto; display: flex; gap: 5px; padding-right: 4px; }
.mdi svg { width: 7px; height: 7px; }

/* toolbar */
.toolbar { height: 20px; display: flex; align-items: center; padding-left: 5px; background: linear-gradient(#c8c8c8, #c8c8c8) 0 100% / 738px 1px no-repeat; }
.tb { width: 20px; height: 17px; flex: none; display: flex; align-items: center; justify-content: center; }
.tb svg { width: 14px; height: 14px; }
.tb.on { background: #cce4f7; }
.dd { width: 6px; flex: none; display: flex; justify-content: center; }
.dd svg { width: 5px; height: 4px; }
.ml1 { margin-left: 1px; } .ml2 { margin-left: 2px; } .ml3 { margin-left: 3px; }
.sep { flex: none; width: 1px; height: 16px; background: #c4c4c4; }
.s1 { margin: 0 2px; } .s2 { margin: 0 3px; } .s3 { margin: 0 2px 0 3px; } .s4 { margin: 0 2px 0 1px; }
.ide { color: #5a7fa3; font-size: 8px; }
.algo { width: 67px; height: 17px; flex: none; background: #cce4f7; display: flex; align-items: center; font-size: 7.6px; color: #333; padding-left: 6px; gap: 4px; white-space: nowrap; }
.algo svg { width: 8px; height: 8px; }
.neworder { width: 57px; flex: none; display: flex; align-items: center; padding-left: 5px; gap: 4px; white-space: nowrap; font-size: 7.6px; }
.neworder svg { width: 10px; height: 11px; }
.tbright { margin-left: auto; display: flex; align-items: center; padding-right: 5px; }
.tbright svg { width: 11px; height: 11px; margin-right: 12px; }
.tbright svg:nth-child(3) { margin-right: 5px; }
.lvl { font-size: 3.5px; fill: #2fa14f; }
.level { width: 28px; height: 9px; background: #fff; border: 1px solid #a8a8a8; }
.level i { display: block; width: 11px; height: 7px; background: #45d045; }
.tfbar { height: 22px; display: flex; align-items: center; padding-left: 5px; color: #335f8a; font-size: 7.8px; border-bottom: 2px solid transparent; }
.tf { width: 21.4px; height: 17px; line-height: 17px; text-align: center; flex: none; }
.tf.on { background: #cce4f7; width: 20px; margin-right: 1.4px; }

/* workspace */
.workspace { height: 505px; display: flex; background: #f0f0f0; }
.left { width: 165px; flex: none; display: flex; flex-direction: column; padding-left: 3px; font-size: 7.5px; }
.panel { display: flex; flex-direction: column; }
.phead { height: 11px; flex: none; display: flex; justify-content: space-between; align-items: center; background: linear-gradient(90deg, #d3e2f0, #eaf1f7); padding: 0 3px 0 1px; font-size: 7.2px; color: #444; white-space: nowrap; }
.phead b { font-size: 8px; color: #333; line-height: 8px; }
.pbody { display: flex; background: #fff; }
.data { height: 119px; } .mw { height: 191px; } .nav { height: 195px; padding-top: 1px; }
.sbar { width: 12px; flex: none; margin-right: 1px; background: #f0f0f0; display: flex; flex-direction: column; align-items: center; padding-top: 2px; }
.sbar svg { width: 6px; height: 5px; flex: none; margin: 1px 0; }
.sbar .thumb { display: block; width: 10px; background: #cdcdcd; }
.t1 { height: 65px; margin-bottom: 23px; margin-top: 2px; }
.t2 { height: 142px; margin-top: 3px; margin-bottom: 5px; }
.t3 { height: 86px; margin-top: 57px; margin-bottom: 2px; }
.dtable { width: 147px; flex: none; border-top: 0; }
.drow { height: 13.34px; display: grid; grid-template-columns: 78px 69px; align-items: center; }
.drow span { padding-left: 14px; height: 100%; display: flex; align-items: center; border-right: 1px solid #d8d8d8; }
.drow span:last-child { justify-content: flex-end; padding: 0 3px 0 0; border-right: 0; font-size: 7.2px; }
.drow.alt { background: #e8e8e8; }
.drow .dsym { padding-left: 2px; gap: 3px; }
.dsym svg { width: 9px; height: 9px; }
.data .pbody { height: 107px; }
.mtable { width: 147px; flex: none; }
.mrow { height: 13.34px; display: grid; grid-template-columns: 72px 37.500px 37.500px; align-items: center; }
.mrow span { display: flex; align-items: center; justify-content: flex-end; padding-right: 1px; height: 100%; }
.mrow span:first-child { justify-content: flex-start; padding-left: 4px; gap: 3px; }
.mrow svg { width: 6px; height: 6px; flex: none; margin-left: 2px; }
.mrow.alt { background: #e8e8e8; }
.mrow.dn span + span { color: #e0454a; }
.mrow.upv span + span { color: #3e3ee0; }
.mrow.hd { height: 16px; margin-top: 1px; }
.mrow.hd span { border-right: 1px solid #e0e0e0; }
.mrow.hd span:first-child { padding-left: 4px; }
.mw .pbody { height: 163px; }
.ptabs { height: 15px; flex: none; display: flex; align-items: stretch; color: #999; padding-top: 1px; background: #f0f0f0; border-top: 1px solid #8f8f8f; margin-top: 1px; }
.ptabs span { flex: none; padding: 0 6.500px; border-right: 1px solid #bbb; line-height: 13px; white-space: nowrap; }
.ptabs span:last-child { border-right: 0; }
.ptabs .active { background: #fff; color: #333; border: 1px solid #555; border-top: 0; width: 41px; margin: -2px 7px 0 1px; padding: 0; text-align: center; line-height: 15px; }
.ptabs .active + span { padding-left: 0; }
.nav .pbody { height: 165px; }
.tree { width: 147px; flex: none; padding-top: 2px; }
.node { height: 13.34px; display: flex; align-items: center; white-space: nowrap; }
.node svg { width: 10px; height: 10px; margin-right: 3px; flex: none; }
.node .box { width: 6px; height: 6px; border: 1px solid #aaa; font-size: 6px; line-height: 4px; text-align: center; font-style: normal; color: #666; margin-right: 5px; flex: none; background: #fff; }
.node .box.nobox { border-color: transparent; background: transparent; }
.l1 { padding-left: 7px; } .l2 { padding-left: 21px; } .l3 { padding-left: 46px; }
.navtabs .active { width: 48px; }
.navtabs { margin-top: 2px; }
.navtabs span { border-right: 0; }

/* chart */
.chart { position: relative; width: 1074px; height: 505px; flex: none; overflow: hidden; }
.plot { display: block; }
.wick path { stroke: #222; fill: none; }
.wc rect { fill: #fff; stroke: #333; }
.bc rect { fill: #000; }
.trade path { stroke: #5b7d9c; stroke-dasharray: 3 2; fill: none; }
.mark circle { fill: #d8503c; stroke: #f4d8d0; stroke-width: 1; }
.mark .bl { fill: #2a78c0; stroke: #cfe2f3; }
.ptext { font: 9.700px "DejaVu Sans Mono", "Liberation Mono", monospace; fill: #d43030; }
.axis text { font: 6.300px "Liberation Sans", sans-serif; fill: #111; }
.tk { stroke: #222; }
.tag { font: 6.300px "Liberation Sans", sans-serif; }
.ctitle { font: 6.200px "Noto Sans", sans-serif; fill: #111; font-weight: 500; }

.psc { position: absolute; left: 5px; top: 13px; width: 229px; height: 266px; background: #f3f3f3; border: 1px solid #bdbdbd; font-family: "DejaVu Sans", sans-serif; font-size: 7.800px; color: #555; }
.psc-title { height: 16px; display: flex; justify-content: space-between; align-items: center; padding: 0 3px 0 2px; color: #444; border-bottom: 1px solid #d9d9d9; white-space: nowrap; }
.psc-tri { display: inline-block; width: 0; height: 0; border: 3px solid transparent; border-bottom: 5px solid #222; border-top: 0; margin-right: 3px; }
.psc-ctl { color: #aaa; font-size: 10px; }
.psc-tabs { display: flex; gap: 10px; padding: 4px 0 0 9px; }
.psc-tabs span { width: 33.500px; height: 13px; line-height: 13px; text-align: center; background: #e1e1e1; border: 1px solid #d0d0d0; }
.psc-tabs .on { background: #bdbdbd; }
.psc-body { padding: 8px 0 0 6px; }
.pr { height: 16px; display: flex; align-items: center; white-space: nowrap; gap: 3px; }
.pr label { width: 36px; }
.pb { height: 14px; line-height: 14px; text-align: center; background: #e6e6e6; border: 1px solid #d8d8d8; }
.long { width: 43px; background: #dbe4ee; }
.val { width: 57px; background: #e3e3d6; text-align: right; padding-right: 5px; }
.wide { width: 100px; background: #dde4ec; text-align: left; padding-left: 5px; }
.in { width: 16px; margin-left: -1px; }
.gap { margin-top: 16px; }
.link { color: #3f9060; font-size: 7px; }

.dialog { position: absolute; left: 51px; top: 70px; width: 517px; height: 259px; background: #f0f0f0; box-shadow: 0 0 6px rgba(0,0,0,.45); font-size: 7px; }
.dlg-title { height: 21px; background: #fff; display: flex; align-items: center; padding-left: 5px; font-size: 7.300px; color: #333; white-space: nowrap; }
.dlg-ctl { margin-left: auto; display: flex; gap: 21px; padding-right: 11px; }
.dlg-ctl svg { width: 9px; height: 9px; }
.dlg-body { display: flex; padding: 6px 0 0 6px; }
.tickbox { width: 204px; height: 220px; flex: none; background: #fff; border: 0; }
.tick { display: block; }
.tgrid path { stroke: #e4e4e4; stroke-dasharray: 1 2; }
.tline { fill: none; stroke: #f58c8c; stroke-width: 2.600; }
.tl, .tl text { font: 6.300px "Liberation Sans", sans-serif; fill: #222; }
.sym { font-size: 6.500px; }
.tl.wh { fill: #fff; }
.orderform { width: 285px; margin-left: 6px; padding-top: 1px; }
.fr { height: 13px; display: flex; align-items: center; margin-bottom: 5px; }
.fr.mt { margin-top: 19px; }
.fr label { width: 65px; text-align: right; margin-right: 4px; flex: none; color: #444; }
.fr .tp { width: 41px; margin: 0 4px 0 40px; }
.combo { width: 216px; height: 13px; background: #e1e1e1; border: 1px solid #c4c4c4; display: flex; align-items: center; justify-content: space-between; padding: 0 3px; flex: none; }
.combo svg { width: 6px; height: 5px; }
.combo.sel { background: #fff; border-color: #5ba5d8; }
.seltext { background: #3f8ed2; color: #0d3763; padding: 0 1px; margin-left: -2px; }
.combo.white { background: #fff; border-color: #aaa; }
.num { width: 54px; height: 13px; background: #fff; border: 1px solid #aaa; text-align: right; padding-right: 5px; line-height: 11px; flex: none; }
.spin { width: 9px; height: 13px; margin-left: 2px; display: flex; flex-direction: column; background: #e6e6e6; border: 1px solid #bbb; flex: none; }
.spin i { flex: 1; font-style: normal; font-size: 3.500px; line-height: 5.500px; text-align: center; color: #333; }
.unit { margin-left: 5px; }
.bigprice { font-size: 17.500px; color: #222; text-align: center; height: 22px; line-height: 22px; width: 285px; margin: 17px 0 18px 3px; white-space: nowrap; }
.bigprice small { font-size: 13.500px; }
.btnrow { display: flex; justify-content: space-between; width: 274px; margin: 0 0 6px 10px; }
.btn { height: 14px; line-height: 14px; text-align: center; font-size: 7px; color: #333; border: 1px solid rgba(0,0,0,.18); }
.btnrow .btn { width: 129px; }
.red { background: linear-gradient(#e79191, #d47070); color: #5a1414; }
.blue { background: linear-gradient(#9fb5e3, #7f9ad0); color: #14255a; }
.yellow { width: 274px; height: 15px; margin-left: 10px; background: linear-gradient(#ecec9c, #d3d37e); }

/* terminal */
.terminal { height: 111px; display: flex; padding-top: 4px; border-bottom: 2px solid #666; font-size: 7.600px; }
.vstrip { width: 9px; flex: none; position: relative; background: linear-gradient(#f0f0f0 10%, #d6e6f5); }
.vstrip b { position: absolute; left: 1px; top: 0; font-size: 8px; line-height: 8px; color: #333; }
.vstrip span { position: absolute; left: 0; bottom: 3px; writing-mode: vertical-rl; transform: rotate(180deg); color: #3a6f9e; font-size: 7.500px; white-space: nowrap; width: 9px; line-height: 9px; }
.termmain { flex: 1; min-width: 0; display: flex; flex-direction: column; background: #fff; border-top: 1px solid #bbb; border-left: 1px solid #ccc; }
.trow { height: 14px; flex: none; display: grid; grid-template-columns: 148px 102px 92px 114px 114px 112px 114px 114px 112px 1fr; align-items: center; white-space: nowrap; }
.trow > span { padding: 0 3px 0 4px; height: 100%; display: flex; align-items: center; border-right: 1px solid #e4e4e4; }
.trow > span:last-child { border-right: 0; }
.trow .r { justify-content: flex-end; }
.nums { font-size: 7.300px; }
.thead { height: 14px; }
.tpc { padding-right: 24px !important; position: relative; }
.tpc em { position: absolute; right: 9px; font-style: normal; font-size: 6px; top: 3px; color: #333; }
.slc em { font-style: normal; color: #888; margin-left: 4px; font-size: 8.500px; line-height: 8px; }
.pr2 { padding-right: 5px !important; }
.profit { color: #3e3ee0; }
.posico { display: inline-block; width: 7px; height: 8px; border: 1px solid #5b8fb9; margin-right: 4px; }
.posn { padding-left: 4px; }
.summary { height: 13px; flex: none; background: #d0d0d0; display: flex; justify-content: space-between; align-items: center; font-weight: 700; padding: 0 4px 0 3px; white-space: nowrap; font-size: 7.700px; }
.cc { display: inline-block; width: 7px; height: 7px; border: 1px solid #555; border-radius: 50%; line-height: 4px; text-align: center; font-style: normal; font-weight: 400; font-size: 6px; margin-right: 3px; }
.sumr em { font-style: normal; color: #2fa14f; margin-left: 4px; font-size: 10px; line-height: 10px; }
.ttabs { margin-top: auto; height: 19px; flex: none; display: flex; align-items: flex-start; padding-top: 2px; background: #f0f0f0; border-top: 1px solid #555; color: #888; white-space: nowrap; }
.ttabs > span { padding: 0 6.300px; border-right: 1px solid #aaa; height: 11px; line-height: 11px; }
.ttabs > .active { background: #fff; color: #333; width: 49px; height: 18px; margin-top: -2px; line-height: 15px; text-align: center; padding: 0; border: 1px solid #555; border-top: 0; }
.ttabs > .last { border-right: 0; }
sub { color: #d33; font-size: 5.500px; font-weight: 700; line-height: 0; margin-left: 1px; }
.tright { margin-left: auto; display: flex; gap: 9px; padding-right: 6px; color: #444; }
.tright span { display: flex; align-items: center; gap: 3px; }
.tright svg { width: 9px; height: 9px; }
.tester { height: 17px; display: flex; align-items: center; position: relative; padding-top: 1px; font-size: 7.600px; }
.tx { width: 9px; flex: none; font-size: 8px; line-height: 8px; padding-left: 1px; }
.testbox { flex: 1; height: 14px; background: #fff; margin-right: 1px; display: flex; align-items: center; padding-left: 3px; border-left: 1px solid #ccc; }
.bullet { margin: 0 6px 0 2px; color: #555; }
.status { height: 16px; display: flex; align-items: center; border-top: 1px solid #ddd; background: #f0f0f0; font-size: 7.600px; }
.s-help { width: 811px; padding-left: 1px; }
.s-def { width: 64px; height: 100%; border-left: 1px solid #d0d0d0; padding-left: 4px; line-height: 15px; }
.s-c { height: 100%; border-left: 1px solid #d0d0d0; }
.c1 { width: 65px; } .c2 { width: 47px; } .c3 { width: 46.500px; } .c4 { width: 44px; }
.s-ping { flex: 1; height: 100%; border-left: 1px solid #d0d0d0; display: flex; align-items: center; padding-left: 3px; gap: 3px; }
.s-ping svg { width: 10px; height: 8px; }

/* taskbar */
.taskbar { width: 41px; height: 720px; background: #1c1c1c; display: flex; flex-direction: column; align-items: stretch; border-left: 1px solid #2b2b2b; color: #e8e8e8; }
.tk { height: 31.330px; flex: none; display: flex; align-items: center; justify-content: center; position: relative; }
.tk.first { height: 28.500px; }
.tk svg { width: 15px; height: 15px; }
.hot { background: #b5651f; box-shadow: inset -2px 0 #e8863a; }
.badge { position: absolute; right: 8px; bottom: 6px; font-size: 5.500px; font-weight: 700; color: #fff; }
.st { box-shadow: inset -2px 0 #6fa8d6; }
.sel { background: #444; box-shadow: inset -2px 0 #6fa8d6; }
.yl { background: linear-gradient(90deg, #77722e 49%, #3a3a3a 49%); height: 27px; box-shadow: inset -2px 0 #e8df30; }
.tray { margin-top: auto; display: flex; flex-direction: column; align-items: center; font-size: 7.600px; padding-bottom: 14px; }
.chev { width: 8px; height: 11px; align-self: flex-start; margin-left: 6px; }
.trayicons { display: flex; gap: 6px; margin-top: 7px; }
.trayicons svg { width: 10px; height: 10px; }
.eng { margin-top: 8px; }
.clock { margin-top: 15px; line-height: 12px; }
.date { line-height: 11px; white-space: nowrap; font-size: 7.200px; }
.notif { width: 12px; height: 12px; margin-top: 11px; }
```
